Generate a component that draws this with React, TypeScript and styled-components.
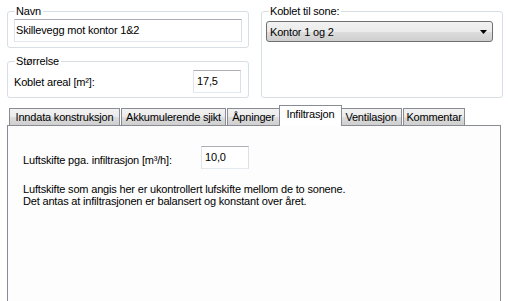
import React from "react";
import styled, { createGlobalStyle } from "styled-components";

const Global = createGlobalStyle`
  html, body { margin: 0; padding: 0; background: #ffffff; }
  body { font-family: "Liberation Sans", Arial, sans-serif; font-size: 11px; color: #000; letter-spacing: -0.18px; }
`;

const Page = styled.div`
  width: 508px;
  height: 301px;
  overflow: hidden;
  padding: 0 7px 0 7px;
  box-sizing: border-box;
`;

const TopRow = styled.div`
  display: grid;
  grid-template-columns: 242px 242px;
  column-gap: 12px;
  margin-top: 5px;
`;

const Column = styled.div`
  display: flex;
  flex-direction: column;
  gap: 7px;
`;

const Group = styled.fieldset<{ $h: number }>`
  margin: 0;
  border: 1px solid #d5dfe5;
  border-radius: 3px;
  padding: 0 6px 0 6px;
  height: ${(p) => p.$h}px;
  box-sizing: border-box;
  min-width: 0;
`;

const Legend = styled.legend`
  padding: 0 2px 0 1px;
  margin-left: 1px;
  line-height: 13px;
  font-size: 11px;
`;

const TextInput = styled.div<{ $w?: number; $pad?: number }>`
  box-sizing: border-box;
  height: 23px;
  width: ${(p) => (p.$w ? `${p.$w}px` : "100%")};
  border: 1px solid #abadb3;
  border-left-color: #e2e3ea;
  border-right-color: #dbdfe6;
  border-bottom-color: #e3e9ef;
  background: #fff;
  padding: 0 ${(p) => p.$pad ?? 3}px;
  display: flex;
  align-items: center;
  line-height: 13px;
`;

const NavnBody = styled.div`
  padding-top: 1px;
`;

const FieldRow = styled.div`
  display: flex;
  align-items: center;
  justify-content: space-between;
  padding-top: 2px;
  padding-right: 1px;
`;

const Combo = styled.div`
  box-sizing: border-box;
  margin-top: 3px;
  margin-left: -2px;
  width: 227px;
  height: 21px;
  border: 1px solid #707070;
  border-radius: 3px;
  background: linear-gradient(#f2f2f2 0%, #ebebeb 50%, #dddddd 51%, #cfcfcf 100%);
  display: flex;
  align-items: center;
  justify-content: space-between;
  padding: 0 5px 0 3px;
`;

const TabsArea = styled.div`
  margin-top: 7px;
`;

const TabStrip = styled.div`
  display: flex;
  align-items: flex-end;
  padding-left: 2px;
  height: 21px;
  position: relative;
  z-index: 1;
  margin-bottom: -1px;
`;

const Tab = styled.div<{ $active?: boolean; $w: number }>`
  box-sizing: border-box;
  width: ${(p) => p.$w}px;
  height: ${(p) => (p.$active ? 21 : 18)}px;
  margin-left: ${(p) => (p.$active ? -2 : 0)}px;
  margin-right: ${(p) => (p.$active ? -2 : 1)}px;
  border: 1px solid #898c95;
  border-bottom: ${(p) => (p.$active ? "none" : "1px solid #898c95")};
  background: ${(p) =>
    p.$active ? "#ffffff" : "linear-gradient(#f2f2f2 0%, #ebebeb 50%, #dddddd 51%, #cfcfcf 100%)"};
  display: flex;
  align-items: ${(p) => (p.$active ? "flex-start" : "center")};
  justify-content: center;
  padding-top: ${(p) => (p.$active ? 2 : 0)}px;
  position: relative;
  z-index: ${(p) => (p.$active ? 2 : 1)};
  white-space: nowrap;
`;

const Panel = styled.div`
  box-sizing: border-box;
  border: 1px solid #898c95;
  background: #fdfdfd;
  height: 190px;
  padding: 20px 0 0 15px;
`;

const InfRow = styled.div`
  display: flex;
  align-items: center;
`;

const InfLabel = styled.span`
  width: 178px;
  padding-top: 4px;
`;

const Para = styled.p`
  margin: 14px 0 0 0;
  line-height: 12px;
`;

const Arrow = () => (
  <svg width="7" height="4" viewBox="0 0 7 4">
    <polygon points="0,0 7,0 3.5,4" fill="#000" />
  </svg>
);

export default function App() {
  return (
    <Page>
      <Global />
      <TopRow>
        <Column>
          <Group $h={43}>
            <Legend>Navn</Legend>
            <NavnBody>
              <TextInput $pad={1}>Skillevegg mot kontor 1&amp;2</TextInput>
            </NavnBody>
          </Group>
          <Group $h={43}>
            <Legend>Størrelse</Legend>
            <FieldRow>
              <span>Koblet areal [m²]:</span>
              <TextInput $w={48}>17,5</TextInput>
            </FieldRow>
          </Group>
        </Column>
        <Group $h={93}>
          <Legend>Koblet til sone:</Legend>
          <Combo>
            <span>Kontor 1 og 2</span>
            <Arrow />
          </Combo>
        </Group>
      </TopRow>
      <TabsArea>
        <TabStrip>
          <Tab $w={111}>Inndata konstruksjon</Tab>
          <Tab $w={105}>Akkumulerende sjikt</Tab>
          <Tab $w={53}>Åpninger</Tab>
          <Tab $w={63} $active>Infiltrasjon</Tab>
          <Tab $w={62}>Ventilasjon</Tab>
          <Tab $w={62}>Kommentar</Tab>
        </TabStrip>
        <Panel>
          <InfRow>
            <InfLabel>Luftskifte pga. infiltrasjon [m³/h]:</InfLabel>
            <TextInput $w={48}>10,0</TextInput>
          </InfRow>
          <Para>
            Luftskifte som angis her er ukontrollert lufskifte mellom de to sonene.
            <br />
            Det antas at infiltrasjonen er balansert og konstant over året.
          </Para>
        </Panel>
      </TabsArea>
    </Page>
  );
}
